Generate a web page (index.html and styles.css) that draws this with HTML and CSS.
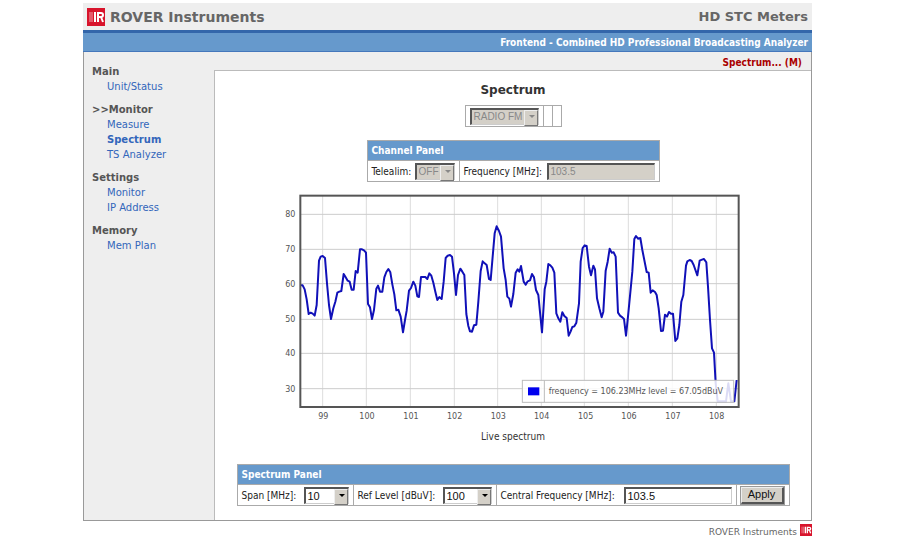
FILE: index.html
```html
<!DOCTYPE html>
<html lang="en">

<head>
    <meta charset="UTF-8">
    <meta name="viewport" content="width=device-width, initial-scale=1.0">
    <title>ROVER Instruments - Spectrum</title>
    <link rel="stylesheet" href="styles.css">
</head>

<body>
    <div class="page">
        <div class="header">
            <svg class="logo" viewBox="0 0 18 18">
                <rect width="18" height="18" fill="#d8142c" />
                <path d="M3 4V14M5 4V14" stroke="#f3a0aa" stroke-width="1" />
                <path d="M8 4V14" stroke="#fff" stroke-width="2" />
                <path d="M11 14V5H14Q16 5 16 7Q16 9 14 9H11M14 9L16 14" fill="none" stroke="#fff" stroke-width="2" />
            </svg>
            <span class="brand">ROVER Instruments</span>
            <span class="product">HD STC Meters</span>
        </div>
        <div class="top-bar">Frontend - Combined HD Professional Broadcasting Analyzer</div>

        <div class="main">
            <div class="sidebar">
                <h3>Main</h3>
                <ul>
                    <li><a href="#">Unit/Status</a></li>
                </ul>
                <h3>&gt;&gt;Monitor</h3>
                <ul>
                    <li><a href="#">Measure</a></li>
                    <li><a href="#" class="active">Spectrum</a></li>
                    <li><a href="#">TS Analyzer</a></li>
                </ul>
                <h3>Settings</h3>
                <ul>
                    <li><a href="#">Monitor</a></li>
                    <li><a href="#">IP Address</a></li>
                </ul>
                <h3>Memory</h3>
                <ul>
                    <li><a href="#">Mem Plan</a></li>
                </ul>
            </div>

            <div class="right">
                <div class="status">Spectrum... (M)</div>
                <div class="content">
                    <h1>Spectrum</h1>

                    <table class="band">
                        <tr>
                            <td>
                                <span class="select off">
                                    <select id="band" class="w-band" aria-label="Band" disabled>
                                        <option>RADIO FM</option>
                                    </select>
                                </span>
                            </td>
                            <td></td>
                            <td></td>
                        </tr>
                    </table>

                    <!-- Channel Panel -->
                    <table class="panel channel">
                        <colgroup>
                            <col class="col-tele">
                            <col>
                        </colgroup>
                        <tr>
                            <th colspan="2">Channel Panel</th>
                        </tr>
                        <tr>
                            <td><div class="field">
                                <label for="telealim">Telealim:</label>
                                <span class="select off">
                                    <select id="telealim" class="w-tele" disabled>
                                        <option>OFF</option>
                                    </select>
                                </span>
                            </div></td>
                            <td><div class="field">
                                <label for="frequency">Frequency [MHz]:</label>
                                <input type="text" id="frequency" value="103.5" disabled>
                            </div></td>
                        </tr>
                    </table>

                    <!-- Live chart -->
                    <svg class="chart" viewBox="0 0 1458 720">
                        <path class="grid" d="M158 17V651M289 17V651M421 17V651M553 17V651M683 17V651M814 17V651M943 17V651M1075 17V651M1207 17V651M1339 17V651" />
                        <path class="grid dark" d="M91 73H1406M91 178H1406M91 281H1406M91 388H1406M91 490H1406M91 596H1406" />
                        <polyline class="trace" points="92,286 98,286 104,298 110,328 116,372 122,368 128,371 134,377 140,345 147,212 152,200 158,198 165,204 171,280 177,345 183,387
                            190,355 196,335 202,308 208,305 214,303 221,252 227,262 233,272 239,275 245,299 251,299 257,243 263,248 270,178 276,178 282,181 288,188 294,342 300,352 306,387
                            312,360 319,296 324,287 330,305 337,305 343,262 349,246 355,237 361,247 367,283 373,313 379,361 385,359 392,380 399,427 405,390 410,362 417,302 423,294 430,275
                            436,287 442,319 447,321 453,261 466,261 472,267 478,250 484,257 490,278 496,305 502,330 508,321 515,327 521,275 527,204 533,197 540,195 546,200 552,250 558,315
                            564,255 571,236 577,245 583,255 589,372 595,408 600,424 606,425 612,406 619,404 625,335 632,243 638,214 644,220 650,225 657,267 662,270 668,200 674,130 680,109
                            687,123 693,140 701,235 707,270 712,320 718,326 723,350 730,312 737,248 743,238 748,245 753,228 761,275 767,284 773,274 780,271 786,252 792,262 798,300 805,315
                            816,427 824,298 829,275 835,222 841,226 847,233 853,248 859,370 865,385 871,395 877,367 883,378 890,384 896,437 902,424 907,411 913,409 919,398 927,340 932,215
                            938,174 944,166 950,168 957,230 963,256 970,227 975,238 981,325 988,355 995,382 1000,365 1007,242 1013,215 1019,176 1025,188 1031,187 1037,200 1044,368
                            1050,377 1057,382 1062,387 1068,437 1074,380 1087,245 1093,147 1098,138 1104,146 1111,144 1117,180 1130,246 1136,248 1142,308 1148,301 1155,306 1160,315
                            1166,355 1173,423 1179,422 1185,374 1191,380 1197,366 1203,371 1209,371 1216,453 1222,445 1228,405 1234,335 1240,315 1248,227 1252,214 1259,210 1265,213
                            1271,225 1282,256 1289,212 1296,209 1302,207 1309,217 1314,290 1320,390 1326,475 1332,488 1337,580 1343,634 1368,634 1375,580 1383,634 1393,634 1400,570" />
                        <rect class="frame" x="91" y="17" width="1315" height="634" />
                        <rect class="legend" x="757" y="571" width="634" height="66" />
                        <path class="legend" d="M823 571V637" />
                        <rect class="swatch" x="774" y="592" width="34" height="24" />
                        <text x="836" y="613">frequency = 106.23MHz level = 67.05dBuV</text>
                        <g text-anchor="end">
                            <text x="76" y="82">80</text>
                            <text x="76" y="187">70</text>
                            <text x="76" y="290">60</text>
                            <text x="76" y="397">50</text>
                            <text x="76" y="499">40</text>
                            <text x="76" y="605">30</text>
                        </g>
                        <g text-anchor="middle">
                            <text x="160" y="688">99</text>
                            <text x="291" y="688">100</text>
                            <text x="423" y="688">101</text>
                            <text x="554" y="688">102</text>
                            <text x="685" y="688">103</text>
                            <text x="815" y="688">104</text>
                            <text x="947" y="688">105</text>
                            <text x="1077" y="688">106</text>
                            <text x="1209" y="688">107</text>
                            <text x="1340" y="688">108</text>
                        </g>
                    </svg>
                    <div class="caption">Live spectrum</div>

                    <!-- Spectrum Panel -->
                    <table class="panel spectrum">
                        <colgroup>
                            <col class="col-span">
                            <col class="col-level">
                            <col>
                            <col class="col-apply">
                        </colgroup>
                        <tr>
                            <th colspan="4">Spectrum Panel</th>
                        </tr>
                        <tr>
                            <td><div class="field">
                                <label for="span">Span [MHz]:</label>
                                <span class="select">
                                    <select id="span" class="w-span">
                                        <option>10</option>
                                    </select>
                                </span>
                            </div></td>
                            <td><div class="field">
                                <label for="level">Ref Level [dBuV]:</label>
                                <span class="select">
                                    <select id="level" class="w-level">
                                        <option>100</option>
                                    </select>
                                </span>
                            </div></td>
                            <td><div class="field">
                                <label for="central">Central Frequency [MHz]:</label>
                                <input type="text" id="central" value="103.5">
                            </div></td>
                            <td><button type="button">Apply</button></td>
                        </tr>
                    </table>
                </div>
            </div>
        </div>

        <div class="footer">
            <span>ROVER Instruments</span>
            <svg class="logo small" viewBox="0 0 18 18">
                <rect width="18" height="18" fill="#d8142c" />
                <path d="M3 4V14M5 4V14" stroke="#f3a0aa" stroke-width="1" />
                <path d="M8 4V14" stroke="#fff" stroke-width="2" />
                <path d="M11 14V5H14Q16 5 16 7Q16 9 14 9H11M14 9L16 14" fill="none" stroke="#fff" stroke-width="2" />
            </svg>
        </div>
    </div>
</body>

</html>
```

FILE: styles.css
```css
* {
    box-sizing: border-box;
}

body {
    font-family: "DejaVu Sans", Verdana, sans-serif;
    font-size: 10px;
    margin: 0;
    padding: 3px 89px 0 83px;
    background-color: #fff;
    color: #333;
}

.header {
    display: flex;
    align-items: center;
    height: 27px;
    padding: 0 4px;
    background-color: #eee;
    color: #666;
    font-size: 14px;
    font-weight: bold;
}

.logo {
    width: 18px;
    height: 18px;
    margin-right: 5px;
}

.product {
    margin-left: auto;
    font-size: 13px;
}

.top-bar {
    height: 22px;
    padding-right: 4px;
    border-top: 3px solid #36a;
    border-bottom: 1px solid #47b;
    background-color: #69c;
    color: #fff;
    font-family: "DejaVu Sans Condensed", "DejaVu Sans", sans-serif;
    font-weight: bold;
    line-height: 19px;
    text-align: right;
}

.main {
    display: flex;
    border: 1px solid #999;
    border-top: none;
    background-color: #eee;
}

.sidebar {
    width: 130px;
    padding: 12px 8px 0;
    line-height: 15px;
}

.sidebar h3 {
    margin: 0;
    color: #555;
    font-size: 10px;
}

.sidebar ul {
    margin: 0 0 8px;
    padding-left: 15px;
    list-style: none;
}

.sidebar a {
    color: #36b;
    text-decoration: none;
}

.sidebar a.active {
    font-weight: bold;
}

.right {
    flex: 1;
}

.status {
    height: 18px;
    padding-right: 9px;
    color: #a00;
    font-family: "DejaVu Sans Condensed", "DejaVu Sans", sans-serif;
    font-weight: bold;
    line-height: 21px;
    text-align: right;
}

.content {
    display: flex;
    flex-direction: column;
    align-items: center;
    padding: 11px 0 14px;
    border-top: 1px solid #bbb;
    border-left: 1px solid #bbb;
    background-color: #fff;
}

h1 {
    margin: 0 0 7px;
    font-size: 12px;
    line-height: 16px;
}

table {
    border-collapse: collapse;
}

td,
th {
    border: 1px solid #aaa;
}

.band {
    width: 95px;
    margin-bottom: 13px;
}

.band td {
    height: 21px;
    padding: 0 4px;
}

.panel {
    table-layout: fixed;
    color: #222;
    font-family: "DejaVu Sans Condensed", "DejaVu Sans", sans-serif;
}

.panel th {
    height: 20px;
    padding: 0 4px;
    background-color: #69c;
    color: #fff;
    text-align: left;
}

.panel td {
    height: 21px;
    padding: 0 4px;
}

.field {
    display: flex;
    align-items: center;
    justify-content: space-between;
    white-space: nowrap;
}

.channel {
    width: 293px;
}

.col-tele {
    width: 92px;
}

.spectrum {
    width: 553px;
}

.col-span {
    width: 116px;
}

.col-level {
    width: 143px;
}

.col-apply {
    width: 53px;
}

select,
input[type="text"] {
    display: block;
    height: 17px;
    margin: 0;
    padding: 0 2px;
    border: 1px solid #ccc;
    border-top: 2px solid #555;
    border-left: 2px solid #555;
    border-radius: 0;
    background-color: #fff;
    color: #111;
    font-family: "Liberation Sans", Arial, sans-serif;
    font-size: 11px;
    appearance: none;
}

input[type="text"] {
    width: 108px;
}

select:disabled,
input[type="text"]:disabled {
    background-color: #d4d0c8;
    color: #888;
    font-size: 10px;
    opacity: 1;
}

/* drop-down arrow */
.select {
    display: block;
    position: relative;
}

.select::before {
    content: "";
    position: absolute;
    top: 2px;
    right: 1px;
    width: 12px;
    height: 14px;
    border: 1px solid #777;
    border-top-color: #eee;
    border-left-color: #eee;
    background-color: #d4d0c8;
    pointer-events: none;
}

.select::after {
    content: "";
    position: absolute;
    top: 7px;
    right: 4px;
    border: 3px solid transparent;
    border-top-color: #000;
    border-bottom: none;
    pointer-events: none;
}

.off::after {
    border-top-color: #888;
}

.w-band {
    width: 69px;
}

.w-tele {
    width: 40px;
}

.w-span {
    width: 45px;
}

.w-level {
    width: 49px;
}

button {
    display: block;
    width: 43px;
    height: 17px;
    padding: 0;
    border: 1px solid #eee;
    border-right: 2px solid #555;
    border-bottom: 2px solid #555;
    outline: 1px solid #999;
    background-color: #d4d0c8;
    color: #111;
    font-family: "Liberation Sans", Arial, sans-serif;
    font-size: 11px;
    line-height: 13px;
}

.chart {
    width: 486px;
    max-width: 100%;
    margin-top: 8px;
}

.chart text {
    fill: #555;
    font-size: 24px;
}

.grid {
    fill: none;
    stroke: #ddd;
    stroke-width: 3;
}

.dark {
    stroke: #ccc;
}

.trace {
    fill: none;
    stroke: #1010b8;
    stroke-width: 6;
    stroke-linejoin: round;
}

.frame {
    fill: none;
    stroke: #555;
    stroke-width: 6;
}

.legend {
    fill: #fff;
    fill-opacity: 0.85;
    stroke: #bbb;
    stroke-width: 3;
}

.swatch {
    fill: #00e;
}

.caption {
    margin-bottom: 20px;
    font-family: "DejaVu Sans Condensed", "DejaVu Sans", sans-serif;
    line-height: 14px;
}

.footer {
    display: flex;
    justify-content: flex-end;
    gap: 3px;
    color: #666;
    font-size: 9px;
    line-height: 23px;
}

.small {
    width: 12px;
    height: 12px;
    margin: 3px 0 0;
}
```
